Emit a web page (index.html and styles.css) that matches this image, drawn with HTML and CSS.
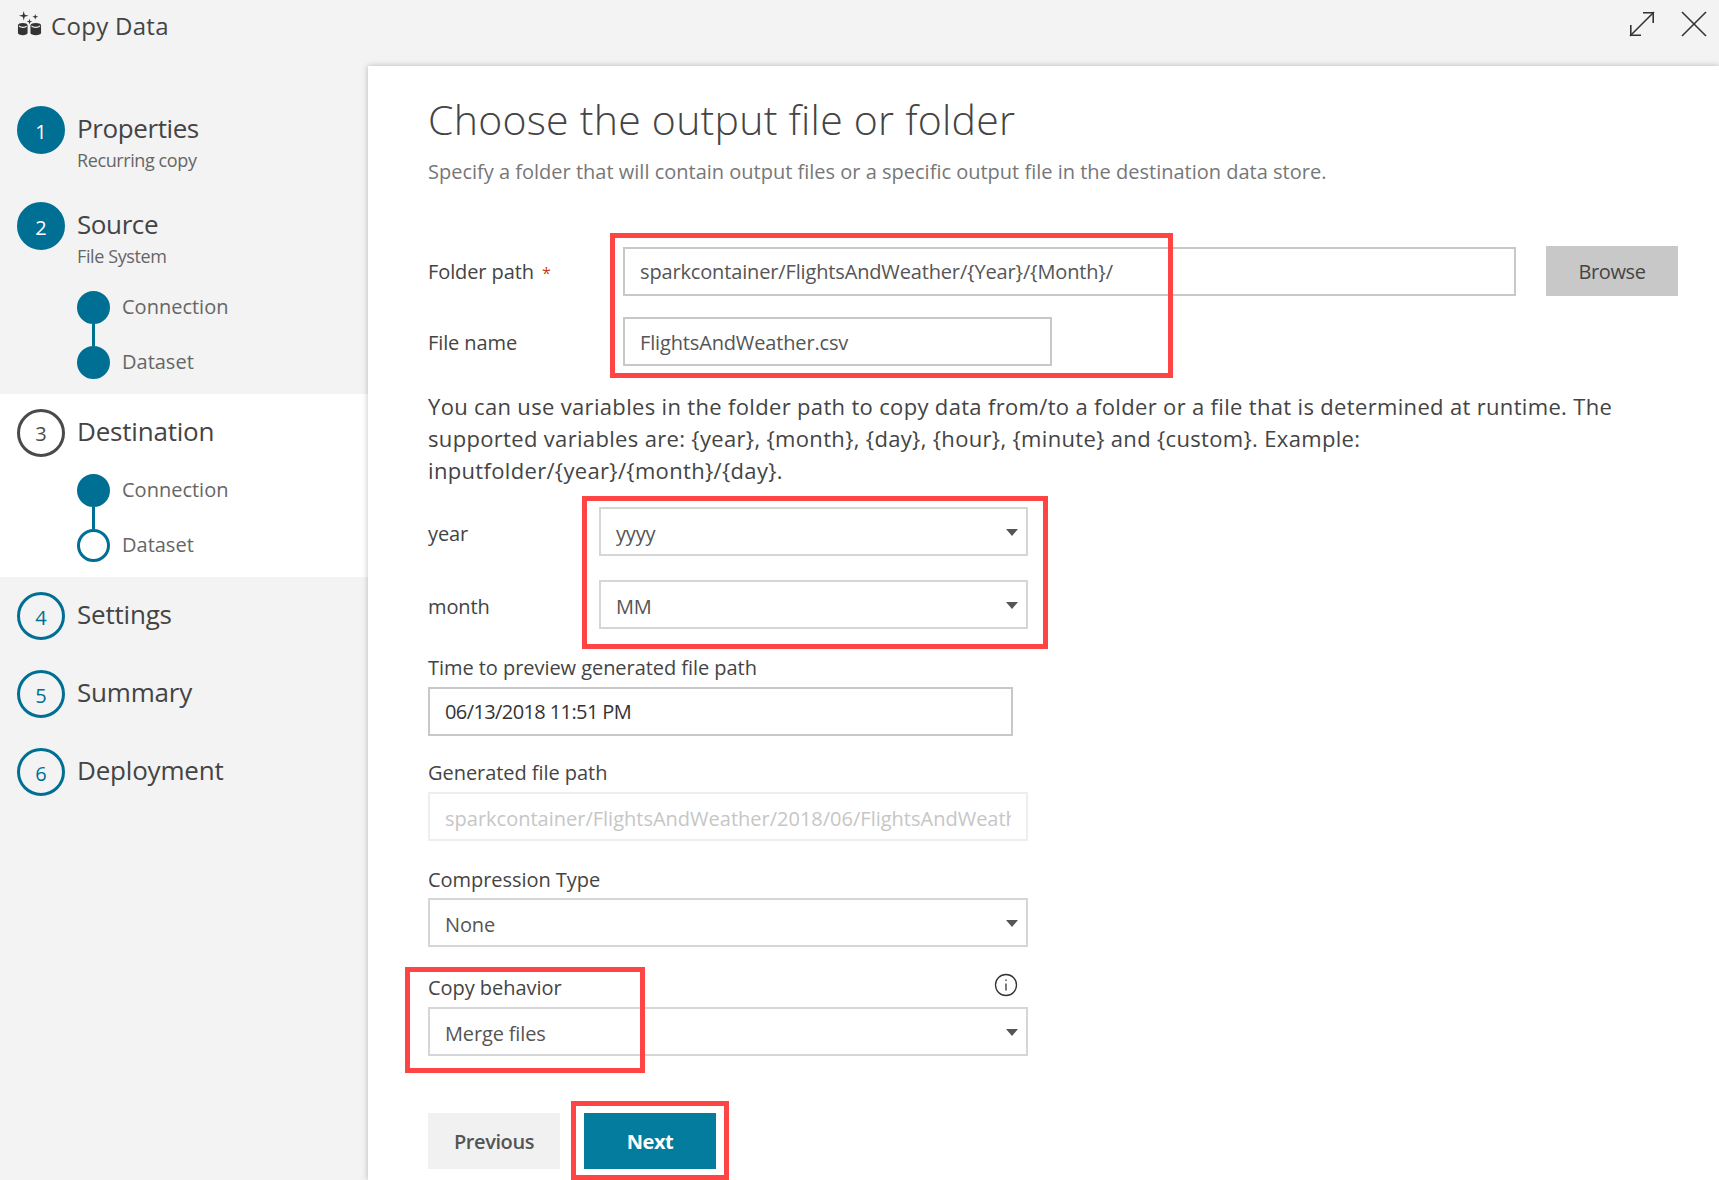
FILE: index.html
```html
<!DOCTYPE html>
<html lang="en">
<head>
  <meta charset="UTF-8" />
  <title>Copy Data</title>
  <link rel="stylesheet" href="styles.css">
</head>
<body>
<div class="app">

  <header class="topbar">
    <div class="brand">
      <svg class="brand-icon" width="26" height="26" viewBox="0 0 26 26">
        <path d="M7 0 L8 4 L12 5 L8 6 L7 10 L6 6 L2 5 L6 4 Z" fill="#333"/>
        <path d="M19 3 L19.7 5.3 L22 6 L19.700 6.700 L19 9 L18.300 6.700 L16 6 L18.300 5.300 Z" fill="#333"/>
        <path d="M13 8 L13.700 10.300 L16 11 L13.700 11.700 L13 14 L12.300 11.700 L10 11 L12.300 10.300 Z" fill="#333"/>
        <path d="M1 15 C1 11.800 11 11.800 11 15 L11 23 C11 25.800 1 25.800 1 23 Z" fill="#333"/>
        <path d="M14 15 C14 11.800 25 11.800 25 15 L25 23 C25 25.800 14 25.800 14 23 Z" fill="#333"/>
        <path d="M2 15.500 C4 17.500 9 17.500 10 15.500" fill="none" stroke="#f3f3f3" stroke-width="1.200"/>
        <path d="M15 15.500 C17 17.500 22 17.500 24 15.500" fill="none" stroke="#f3f3f3" stroke-width="1.200"/>
      </svg>
      <span>Copy Data</span>
    </div>
    <div class="window-actions">
      <svg width="26" height="26" viewBox="0 0 26 26" fill="none" stroke="#333" stroke-width="1.600">
        <path d="M1 25 L25 1"/>
        <path d="M14 1.800 L24.200 1.800 L24.200 12"/>
        <path d="M1.800 14 L1.800 24.200 L12 24.200"/>
      </svg>
      <svg width="26" height="26" viewBox="0 0 26 26" fill="none" stroke="#333" stroke-width="1.600">
        <path d="M1 1 L25 25"/>
        <path d="M25 1 L1 25"/>
      </svg>
    </div>
  </header>

  <div class="content">
    <aside class="sidebar">

      <div class="step">
        <div class="step-num done">1</div>
        <div>
          <div class="step-title">Properties</div>
          <div class="step-sub">Recurring copy</div>
        </div>
      </div>

      <div class="step">
        <div class="step-num done">2</div>
        <div>
          <div class="step-title">Source</div>
          <div class="step-sub">File System</div>
        </div>
      </div>
      <div class="substeps substeps-source">
        <div class="substep"><span class="dot filled"></span><span class="substep-text">Connection</span></div>
        <div class="substep"><span class="dot filled"></span><span class="substep-text">Dataset</span></div>
      </div>

      <div class="current">
        <div class="step step-plain">
          <div class="step-num active">3</div>
          <div class="step-title">Destination</div>
        </div>
        <div class="substeps">
          <div class="substep"><span class="dot filled"></span><span class="substep-text">Connection</span></div>
          <div class="substep"><span class="dot"></span><span class="substep-text">Dataset</span></div>
        </div>
      </div>

      <div class="step step-plain step-todo">
        <div class="step-num">4</div>
        <div class="step-title">Settings</div>
      </div>
      <div class="step step-plain step-todo">
        <div class="step-num">5</div>
        <div class="step-title">Summary</div>
      </div>
      <div class="step step-plain step-todo">
        <div class="step-num">6</div>
        <div class="step-title">Deployment</div>
      </div>
    </aside>

    <main class="main">
      <h1>Choose the output file or folder</h1>
      <p class="lead">Specify a folder that will contain output files or a specific output file in the destination data store.</p>

      <div class="row row-path">
        <label class="row-label path-label">Folder path <span class="req">*</span></label>
        <div class="box box-input folder-input">sparkcontainer/FlightsAndWeather/{Year}/{Month}/</div>
        <button class="btn btn-browse">Browse</button>
      </div>
      <div class="row row-file">
        <label class="row-label path-label">File name</label>
        <div class="box box-input file-input">FlightsAndWeather.csv</div>
      </div>

      <p class="help">You can use variables in the folder path to copy data from/to a folder or a file that is determined at runtime. The supported variables are: {year}, {month}, {day}, {hour}, {minute} and {custom}. Example: inputfolder/{year}/{month}/{day}.</p>

      <div class="row row-year">
        <label class="row-label var-label">year</label>
        <div class="box box-select var-select">yyyy</div>
      </div>
      <div class="row row-month">
        <label class="row-label var-label">month</label>
        <div class="box box-select var-select">MM</div>
      </div>

      <div class="field field-time">
        <label>Time to preview generated file path</label>
        <div class="box box-input time-input">06/13/2018 11:51 PM</div>
      </div>
      <div class="field field-generated">
        <label>Generated file path</label>
        <div class="box box-disabled"><span class="clip">sparkcontainer/FlightsAndWeather/2018/06/FlightsAndWeather.csv</span></div>
      </div>
      <div class="field field-compression">
        <label>Compression Type</label>
        <div class="box box-select">None</div>
      </div>
      <div class="field field-copy">
        <label>Copy behavior
          <svg class="info" width="24" height="24" viewBox="0 0 24 24" fill="none" stroke="#333" stroke-width="1.300">
            <circle cx="12" cy="12" r="10.500"/>
            <path d="M12 10.500 L12 17.500"/>
            <path d="M12 6.500 L12 8"/>
          </svg>
        </label>
        <div class="box box-select">Merge files</div>
      </div>

      <div class="actions">
        <button class="btn btn-prev">Previous</button>
        <button class="btn btn-next">Next</button>
      </div>
    </main>
  </div>

  <div class="mark mark-path"></div>
  <div class="mark mark-vars"></div>
  <div class="mark mark-copy"></div>
  <div class="mark mark-next"></div>
</div>
</body>
</html>
```

FILE: styles.css
```css
* {
  box-sizing: border-box;
}

body {
  margin: 0;
  font-family: "Open Sans", "Noto Sans", sans-serif;
  background: #f3f3f3;
  color: #444;
}

.app {
  position: relative;
  width: 1719px;
  height: 1180px;
  overflow: hidden;
  display: flex;
  flex-direction: column;
}

/* top bar */
.topbar {
  height: 66px;
  flex: none;
  display: flex;
  justify-content: space-between;
  padding: 11px 12px 0 17px;
}

.brand {
  display: flex;
  align-items: flex-start;
  gap: 9px;
  font-size: 24px;
  line-height: 30px;
  color: #444;
  letter-spacing: 0.3px;
}

.brand-icon {
  width: 25px;
  height: 25px;
}

.window-actions {
  display: flex;
  gap: 26px;
}

.content {
  flex: 1;
  display: flex;
  min-height: 0;
}

/* left steps */
.sidebar {
  width: 368px;
  flex: none;
  padding-top: 40px;
}

.step {
  display: flex;
  gap: 12px;
  padding-left: 17px;
  height: 96px;
}

.step-plain {
  height: 47px;
  align-items: center;
}

.step-todo {
  height: 48px;
  margin-bottom: 30px;
}

.step-num {
  width: 48px;
  height: 48px;
  flex: none;
  border-radius: 50%;
  border: 3px solid #006f94;
  color: #006f94;
  display: flex;
  align-items: center;
  justify-content: center;
  font-size: 20px;
  padding-top: 2px;
}

.step-num.done {
  background: #006f94;
  color: #fff;
}

.step-num.active {
  border-color: #4a4a4a;
  color: #4a4a4a;
}

.step-title {
  font-size: 26px;
  line-height: 36px;
  margin-top: 4px;
  color: #444;
  letter-spacing: -0.4px;
}

.step-plain .step-title {
  margin-top: 0;
  margin-bottom: 4px;
  letter-spacing: -0.2px;
}

.step-sub {
  font-size: 18px;
  line-height: 24px;
  margin-top: 2px;
  color: #666;
  letter-spacing: -0.4px;
}

.substeps {
  padding-left: 77px;
  display: flex;
  flex-direction: column;
  gap: 22px;
}

.substeps-source {
  margin-top: -7px;
  height: 103px;
}

.current {
  background: #fff;
  height: 183px;
  padding-top: 15px;
  margin-bottom: 15px;
}

.current .substeps {
  margin-top: 18px;
}

.substep {
  position: relative;
  display: flex;
  align-items: center;
  gap: 12px;
  height: 33px;
  font-size: 20px;
  color: #666;
}

.substep-text {
  margin-bottom: 3px;
}

.dot {
  width: 33px;
  height: 33px;
  flex: none;
  border-radius: 50%;
  border: 3px solid #006f94;
  background: #fff;
}

.dot.filled {
  background: #006f94;
}

/* line between the two sub steps */
.substep:first-child::after {
  content: "";
  position: absolute;
  left: 15px;
  top: 33px;
  width: 3px;
  height: 22px;
  background: #006f94;
}

/* form */
.main {
  position: relative;
  flex: 1;
  background: #fff;
  box-shadow: 0 0 6px rgba(0, 0, 0, 0.25);
  padding: 28px 0 0 60px;
}

h1 {
  margin: 0;
  font-size: 41px;
  line-height: 50px;
  font-weight: 300;
  color: #444;
  letter-spacing: 0.25px;
}

.lead {
  margin: 14px 0 0;
  font-size: 20px;
  line-height: 28px;
  color: #777;
}

.row {
  display: flex;
  align-items: center;
}

.row-path {
  margin-top: 60px;
}

.row-file {
  margin-top: 21px;
}

.row-label {
  font-size: 20px;
  color: #444;
  letter-spacing: -0.1px;
}

.path-label {
  width: 195px;
  flex: none;
}

.row-file .path-label {
  padding-top: 2px;
}

.var-label {
  width: 171px;
  flex: none;
  padding-top: 4px;
}

.req {
  font-size: 16px;
  color: #c8391e;
  margin-left: 3px;
}

.box {
  height: 49px;
  display: flex;
  align-items: center;
  padding: 0 15px;
  font-size: 20px;
  letter-spacing: -0.15px;
  white-space: nowrap;
  overflow: hidden;
  background: #fff;
}

.box-input {
  border: 2px solid #c8c8c8;
  color: #555;
}

.box-select {
  position: relative;
  border: 2px solid #d6d6d6;
  color: #555;
  width: 600px;
  padding-top: 3px;
}

/* dropdown arrow */
.box-select::after {
  content: "";
  position: absolute;
  right: 8px;
  top: 20px;
  border-left: 6px solid transparent;
  border-right: 6px solid transparent;
  border-top: 7px solid #555;
}

.box-disabled {
  border: 2px solid #eee;
  color: #c6c6c6;
  width: 600px;
  padding-top: 3px;
  letter-spacing: 0;
}

.clip {
  display: block;
  overflow: hidden;
  width: 100%;
}

.folder-input {
  width: 893px;
}

.file-input {
  width: 429px;
  padding-top: 2px;
}

.var-select {
  width: 429px;
}

.time-input {
  width: 585px;
  color: #333;
  letter-spacing: -0.6px;
}

.btn-browse {
  margin-left: 30px;
  width: 132px;
  height: 50px;
  background: #c8c8c8;
}

.btn {
  border: 0;
  font-family: inherit;
  font-size: 20px;
  letter-spacing: -0.4px;
  color: #444;
}

.help {
  margin: 24px 0 0;
  width: 1260px;
  font-size: 22px;
  line-height: 32px;
  color: #444;
  letter-spacing: 0.33px;
}

.row-year {
  margin-top: 21px;
}

.row-month {
  margin-top: 24px;
}

.field label {
  position: relative;
  display: block;
  width: 600px;
  font-size: 20px;
  line-height: 26px;
  color: #444;
  letter-spacing: -0.05px;
}

.field-time {
  margin-top: 26px;
}

.field-time label {
  margin-bottom: 6px;
}

.field-generated {
  margin-top: 24px;
}

.field-generated label {
  margin-bottom: 6px;
}

.field-compression {
  margin-top: 26px;
}

.field-compression label {
  margin-bottom: 5px;
}

.field-copy {
  margin-top: 28px;
}

.field-copy label {
  margin-bottom: 6px;
}

.info {
  position: absolute;
  right: 10px;
  top: -2px;
}

.actions {
  margin-top: 57px;
  display: flex;
  gap: 24px;
}

.actions .btn {
  width: 132px;
  height: 56px;
}

.btn-prev {
  background: #f1f1f1;
  font-weight: 600;
  color: #555;
}

.btn-next {
  background: #047c9e;
  color: #fff;
  font-weight: 700;
}

/* red callouts drawn over the screenshot */
.mark {
  position: absolute;
  border: 5px solid #ff4444;
}

.mark-path {
  left: 610px;
  top: 233px;
  width: 563px;
  height: 145px;
}

.mark-vars {
  left: 582px;
  top: 496px;
  width: 466px;
  height: 153px;
}

.mark-copy {
  left: 405px;
  top: 967px;
  width: 240px;
  height: 106px;
}

.mark-next {
  left: 571px;
  top: 1101px;
  width: 158px;
  height: 79px;
}
```
